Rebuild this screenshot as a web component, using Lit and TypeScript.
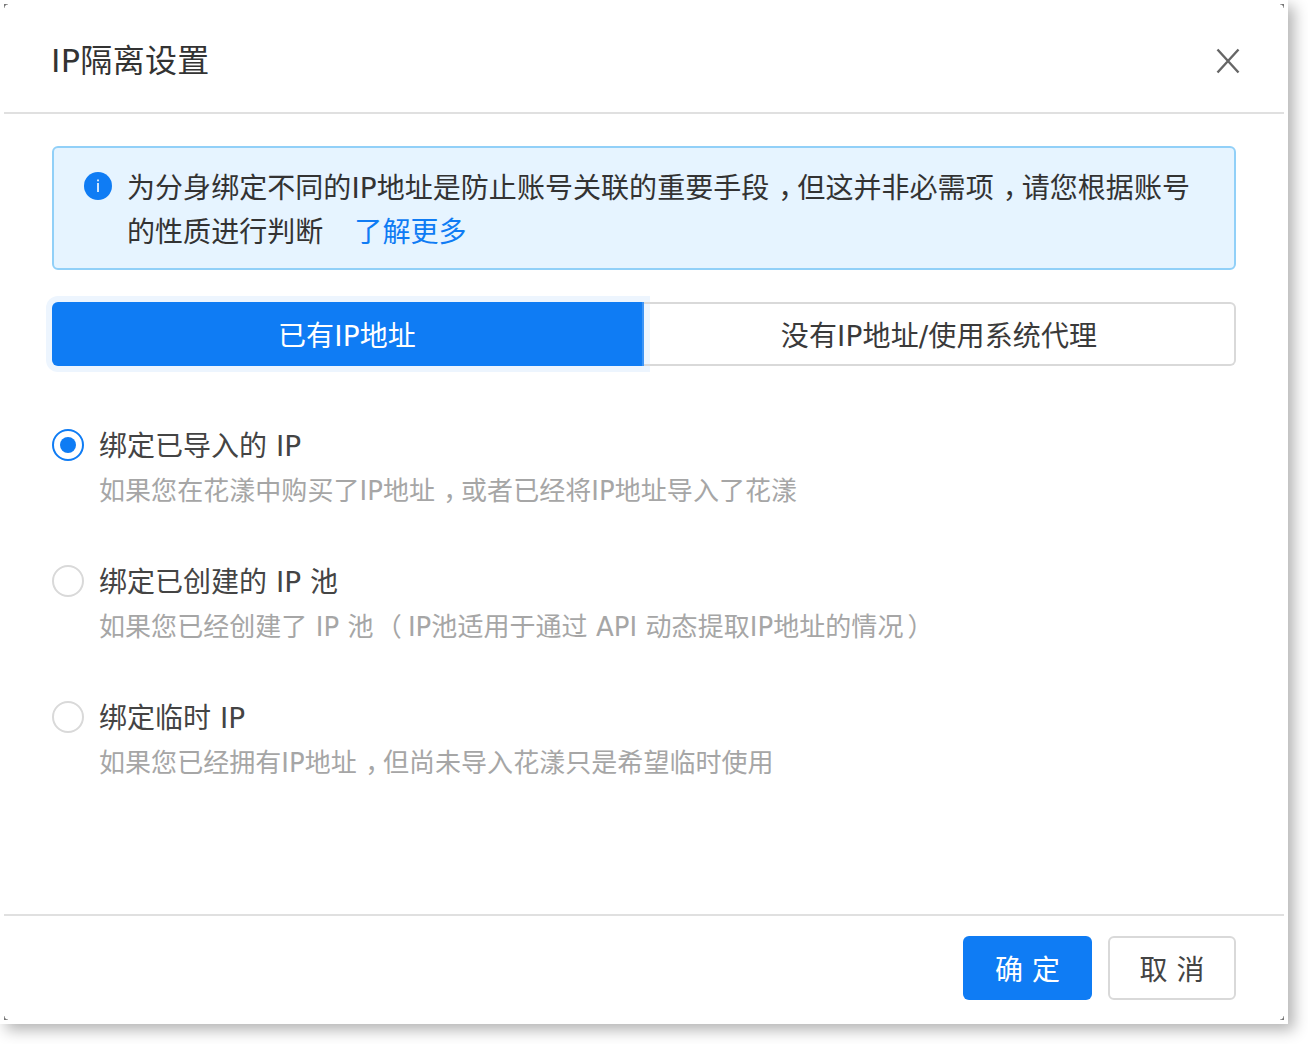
import { LitElement, html, css } from "lit";
import { customElement } from "lit/decorators.js";

const comma = html`<span class="c">，</span>`;

const options = [
  { label: html`绑定已导入的 IP`, desc: html`如果您在花漾中购买了IP地址${comma}或者已经将IP地址导入了花漾`, checked: true },
  { label: html`绑定已创建的 IP 池`, desc: html`如果您已经创建了 IP 池 <span class="po">（</span>IP池适用于通过 API 动态提取IP地址的情况<span class="pc">）</span>`, checked: false },
  { label: html`绑定临时 IP`, desc: html`如果您已经拥有IP地址${comma}但尚未导入花漾只是希望临时使用`, checked: false },
];

@customElement("app-root")
export class AppRoot extends LitElement {
  static styles = css`
    :host {
      display: block;
      width: 1308px;
      height: 1044px;
      background: #fff;
      overflow: hidden;
      font-family: "DejaVu Sans", "Noto Sans CJK SC", sans-serif;
      color: #3a3a3a;
    }
    .c {
      display: inline-block;
      box-sizing: border-box;
      width: 1em;
      padding-left: 0.32em;
      white-space: nowrap;
    }
    .po, .pc { font-family: "Noto Sans CJK TC", sans-serif; line-height: 0; }
    .po { margin: 0 6px 0 -6px; }
    .pc { margin: 0 -4px 0 4px; }
    .panel {
      width: 1288px;
      height: 1024px;
      box-sizing: border-box;
      padding: 4px 4px 0;
      background: #fff;
      box-shadow: 6px 6px 14px rgba(0, 0, 0, 0.3);
      display: flex;
      flex-direction: column;
      position: relative;
    }
    .corner { position: absolute; width: 4px; height: 4px; }
    .tl { left: 4px; top: 4px; background: radial-gradient(circle at 100% 100%, transparent 3px, #777 4px); }
    .tr { left: 1280px; top: 4px; background: radial-gradient(circle at 0 100%, transparent 3px, #777 4px); }
    .bl { left: 4px; top: 1016px; background: radial-gradient(circle at 100% 0, transparent 3px, #777 4px); }
    .br { left: 1280px; top: 1016px; background: radial-gradient(circle at 0 0, transparent 3px, #777 4px); }
    .head {
      height: 110px;
      box-sizing: border-box;
      border-bottom: 2px solid #e0e0e0;
      padding: 0 48px;
      display: flex;
      align-items: center;
      justify-content: space-between;
      font-size: 32px;
      color: #333;
    }
    .title { letter-spacing: 0.3px; margin-left: -1px; }
    .close { width: 24px; height: 26px; margin: 5px -4px 0 0; display: block; }
    .body {
      flex: 1;
      padding: 32px 48px 0;
    }
    .alert {
      box-sizing: border-box;
      height: 124px;
      border: 2px solid #91d0f8;
      border-radius: 6px;
      background: #e6f4ff;
      padding: 19px 30px 0;
      display: flex;
      gap: 15px;
      font-size: 28px;
      line-height: 44px;
      letter-spacing: 0.05px;
      color: #333;
    }
    .info { width: 28px; height: 28px; flex: none; margin-top: 5px; }
    .alert a { color: #0f7cf4; margin-left: 31px; }
    .tabs {
      display: flex;
      height: 64px;
      margin-top: 32px;
      font-size: 28px;
      letter-spacing: 0.15px;
    }
    .tab {
      flex: 1;
      display: flex;
      align-items: center;
      justify-content: center;
      box-sizing: border-box;
    }
    .tab.on {
      flex: 0 0 592px;
      background: #0f7cf4;
      color: #fff;
      border-radius: 6px 0 0 6px;
      border-right: 2px solid #3d95f6;
      box-shadow: 0 0 0 6px #edf5fe;
    }
    .tab.off {
      border: 2px solid #d9d9d9;
      border-left: 0;
      border-radius: 0 6px 6px 0;
    }
    .opts { margin-top: 48px; display: flex; flex-direction: column; gap: 32px; }
    .opt { display: flex; gap: 15px; height: 104px; }
    .radio {
      width: 32px;
      height: 32px;
      box-sizing: border-box;
      border-radius: 50%;
      border: 2px solid #d9d9d9;
      flex: none;
      margin-top: 15px;
      margin-right: 1px;
      display: flex;
      align-items: center;
      justify-content: center;
    }
    .radio.on { border-color: #0f7cf4; }
    .radio.on::after {
      content: "";
      width: 16px;
      height: 16px;
      border-radius: 50%;
      background: #0f7cf4;
    }
    .text { margin-left: -1px; flex: 1; }
    .label { font-size: 28px; line-height: 44px; color: #444; margin-top: 11px; }
    .desc { font-size: 26px; line-height: 44px; color: #a6a6a6; letter-spacing: 0.05px; white-space: nowrap; }
    .foot {
      height: 110px;
      box-sizing: border-box;
      border-top: 2px solid #e0e0e0;
      padding: 20px 48px 0;
      display: flex;
      justify-content: flex-end;
      gap: 16px;
    }
    .btn {
      box-sizing: border-box;
      height: 64px;
      width: 128px;
      border-radius: 6px;
      display: flex;
      align-items: center;
      justify-content: center;
      font-size: 28px;
      white-space: pre;
    }
    .btn.primary { background: #0f7cf4; color: #fff; width: 129px; }
    .btn.plain { border: 2px solid #d9d9d9; color: #444; }
  `;

  render() {
    return html`
      <div class="panel">
        <i class="corner tl"></i><i class="corner tr"></i><i class="corner bl"></i><i class="corner br"></i>
        <div class="head">
          <span class="title">IP隔离设置</span>
          <svg class="close" viewBox="0 0 24 26" fill="none" stroke="#666" stroke-width="2.4">
            <path d="M1.5 1.5 L22.5 24.5 M22.5 1.5 L1.5 24.5"></path>
          </svg>
        </div>
        <div class="body">
          <div class="alert">
            <svg class="info" viewBox="0 0 28 28">
              <circle cx="14" cy="14" r="14" fill="#0f7cf4"></circle>
              <rect x="13.2" y="11" width="1.6" height="9" fill="#fff"></rect>
              <rect x="13.2" y="7.5" width="1.6" height="1.8" fill="#fff"></rect>
            </svg>
            <div>为分身绑定不同的IP地址是防止账号关联的重要手段${comma}但这并非必需项${comma}请您根据账号的性质进行判断<a>了解更多</a></div>
          </div>
          <div class="tabs">
            <div class="tab on">已有IP地址</div>
            <div class="tab off">没有IP地址/使用系统代理</div>
          </div>
          <div class="opts">
            ${options.map(
              (o) => html`
                <div class="opt">
                  <div class="radio ${o.checked ? "on" : ""}"></div>
                  <div class="text">
                    <div class="label">${o.label}</div>
                    <div class="desc">${o.desc}</div>
                  </div>
                </div>
              `
            )}
          </div>
        </div>
        <div class="foot">
          <div class="btn primary">确 定</div>
          <div class="btn plain">取 消</div>
        </div>
      </div>
    `;
  }
}
